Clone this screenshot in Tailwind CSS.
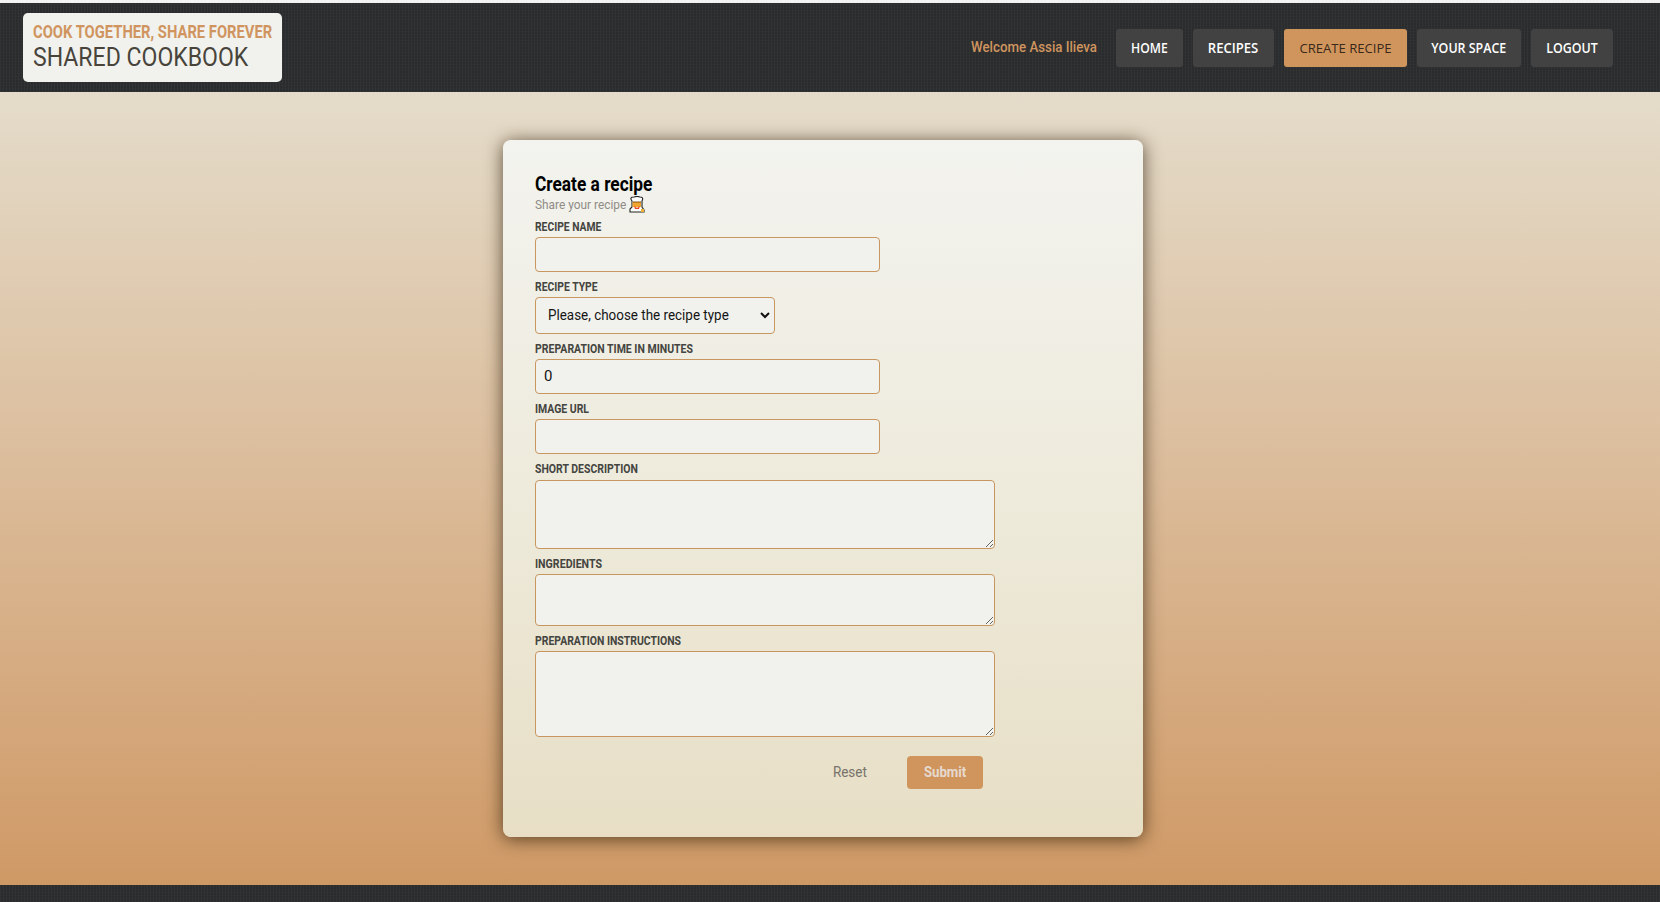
<!DOCTYPE html>
<html lang="en"><head><meta charset="utf-8"><title>Shared Cookbook</title>
<script src="https://cdn.jsdelivr.net/npm/@tailwindcss/browser@4"></script></head>
<body class="h-[902px] overflow-hidden flex flex-col font-['Roboto','Liberation_Sans',sans-serif] bg-[#f2f3f2]">
<header class="mt-[3px] h-[89px] shrink-0 flex justify-between pl-[23px] pr-[47px] bg-[#2c2d2f] bg-[repeating-linear-gradient(90deg,#323335_0_1px,transparent_1px_3px),repeating-linear-gradient(0deg,#2e2f31_0_1px,#2a2b2d_1px_3px)]">
  <div class="mt-[10px] w-[259px] h-[69px] rounded-[5px] bg-[#f1f2ee] pl-[9.5px] pt-[9px] whitespace-nowrap">
    <div class="h-[21px] leading-[20px] text-[17.5px] font-bold text-[#d0955f]"><span class="inline-block origin-left scale-x-[0.843]">COOK TOGETHER, SHARE FOREVER</span></div>
    <div class="h-[30px] leading-[30px] text-[25px] text-[#48443b]"><span class="inline-block origin-left scale-x-[0.922]">SHARED COOKBOOK</span></div>
  </div>
  <nav class="mt-[26px] flex gap-[10px] h-[38px] text-[13.5px] font-semibold text-white whitespace-nowrap font-['Open_Sans',sans-serif]">
    <div class="w-[135px] leading-[36px] text-[15px] text-[#d0955f] font-medium font-['Roboto',sans-serif]"><span class="inline-block origin-left scale-x-[0.885]">Welcome Assia Ilieva</span></div>
    <a class="w-[67px] rounded-[3px] bg-[#424242] flex items-center justify-center"><span class="scale-x-[0.9]">HOME</span></a>
    <a class="w-[81px] rounded-[3px] bg-[#424242] flex items-center justify-center"><span class="scale-x-[0.97]">RECIPES</span></a>
    <a class="w-[123px] rounded-[3px] bg-[#d0955c] text-[#39291b] font-medium flex items-center justify-center"><span class="scale-x-[0.97]">CREATE RECIPE</span></a>
    <a class="w-[104px] rounded-[3px] bg-[#424242] flex items-center justify-center"><span class="scale-x-[0.92]">YOUR SPACE</span></a>
    <a class="w-[82px] rounded-[3px] bg-[#424242] flex items-center justify-center"><span class="scale-x-[0.92]">LOGOUT</span></a>
  </nav>
</header>
<main class="h-[793px] shrink-0 pt-[48px] pl-[503px] bg-linear-to-b from-[#e4dcca] to-[#cf9965]">
  <form class="w-[640px] h-[697px] rounded-[8px] pl-[31.5px] pt-[32px] bg-linear-to-b from-[#f3f3ef] via-[#eeebdc] to-[#e7dec5] shadow-[0_2px_18px_rgba(45,30,10,0.75)] whitespace-nowrap text-[#444440]">
    <h1 class="h-[22px] leading-[24px] text-[20px] font-bold text-black"><span class="inline-block origin-left scale-x-[0.865]">Create a recipe</span></h1>
    <div class="h-[20px] flex items-center text-[13.5px] text-[#8f8c86]"><span class="w-[94.5px]"><span class="inline-block origin-left scale-x-[0.88]">Share your recipe</span></span>
      <svg width="16" height="17" viewBox="0 0 16 17"><path d="M3 5Q0 1 5 1Q8 0 11 1Q15 1 13 5V11L15 14V16H1V13L3 11Z" fill="#fff" stroke="#222" stroke-width="1.1"/><path d="M3.5 6H12V11H3.5Z" fill="#f2a52c"/><path d="M4 6h8" stroke="#805016"/><path d="M5 10L8 12L11 10L10 13H6Z" fill="#e94427"/><path d="M12 13h3v3h-3z" fill="#efb436"/></svg></div>
    <label class="h-[23px] pb-[2px] flex items-end leading-[16px] text-[12.5px] font-bold"><span class="origin-left scale-x-[0.825]">RECIPE NAME</span></label>
    <input class="block ml-[0.5px] w-[345px] h-[35px] rounded-[4px] border border-[#c8965f] bg-[#f1f2ee]">
    <label class="h-[25px] pb-[2px] flex items-end leading-[16px] text-[12.5px] font-bold"><span class="origin-left scale-x-[0.83]">RECIPE TYPE</span></label>
    <div class="ml-[0.5px] w-[240px] h-[37px] rounded-[4px] border border-[#c8965f] bg-[#f1f2ee] flex items-center justify-between pl-[12px] pr-[4px] text-[15px] text-[#151515]"><span class="origin-left scale-x-[0.895]">Please, choose the recipe type</span><svg class="shrink-0" width="10" height="7" viewBox="0 0 10 7"><path d="M1 1L5 5L9 1" fill="none" stroke="#111" stroke-width="2"/></svg></div>
    <label class="h-[25px] pb-[2px] flex items-end leading-[16px] text-[12.5px] font-bold"><span class="origin-left scale-x-[0.84]">PREPARATION TIME IN MINUTES</span></label>
    <input value="0" class="block ml-[0.5px] w-[345px] h-[35px] rounded-[4px] border border-[#c8965f] bg-[#f1f2ee] pl-[8px] pb-px text-[15px] text-[#151515]">
    <label class="h-[25px] pb-[2px] flex items-end leading-[16px] text-[12.5px] font-bold"><span class="origin-left scale-x-[0.835]">IMAGE URL</span></label>
    <input class="block ml-[0.5px] w-[345px] h-[35px] rounded-[4px] border border-[#c8965f] bg-[#f1f2ee]">
    <label class="h-[26px] pb-[3px] flex items-end leading-[16px] text-[12.5px] font-bold"><span class="origin-left scale-x-[0.837]">SHORT DESCRIPTION</span></label>
    <textarea class="block ml-[0.5px] resize w-[460px] h-[69px] rounded-[4px] border border-[#c8965f] bg-[#f1f2ee]"></textarea>
    <label class="h-[25px] pb-[2px] flex items-end leading-[16px] text-[12.5px] font-bold"><span class="origin-left scale-x-[0.85]">INGREDIENTS</span></label>
    <textarea class="block ml-[0.5px] resize w-[460px] h-[52px] rounded-[4px] border border-[#c8965f] bg-[#f1f2ee]"></textarea>
    <label class="h-[25px] pb-[2px] flex items-end leading-[16px] text-[12.5px] font-bold"><span class="origin-left scale-x-[0.835]">PREPARATION INSTRUCTIONS</span></label>
    <textarea class="block ml-[0.5px] resize w-[460px] h-[86px] rounded-[4px] border border-[#c8965f] bg-[#f1f2ee]"></textarea>
    <div class="mt-[19px] ml-[0.5px] h-[33px] w-[448px] flex justify-end items-center gap-[24px] text-[15px]"><span class="w-[66px] text-center text-[#77736a]"><span class="inline-block scale-x-[0.9]">Reset</span></span><span class="w-[76px] h-[33px] rounded-[4px] bg-[#d0955c] flex items-center justify-center font-bold text-[#e6d9d0]"><span class="scale-x-[0.88]">Submit</span></span></div>
  </form>
</main>
<footer class="h-[17px] shrink-0 bg-[#2c2d2f] bg-[repeating-linear-gradient(90deg,#323335_0_1px,transparent_1px_3px),repeating-linear-gradient(0deg,#2e2f31_0_1px,#2a2b2d_1px_3px)]"></footer>
</body></html>
